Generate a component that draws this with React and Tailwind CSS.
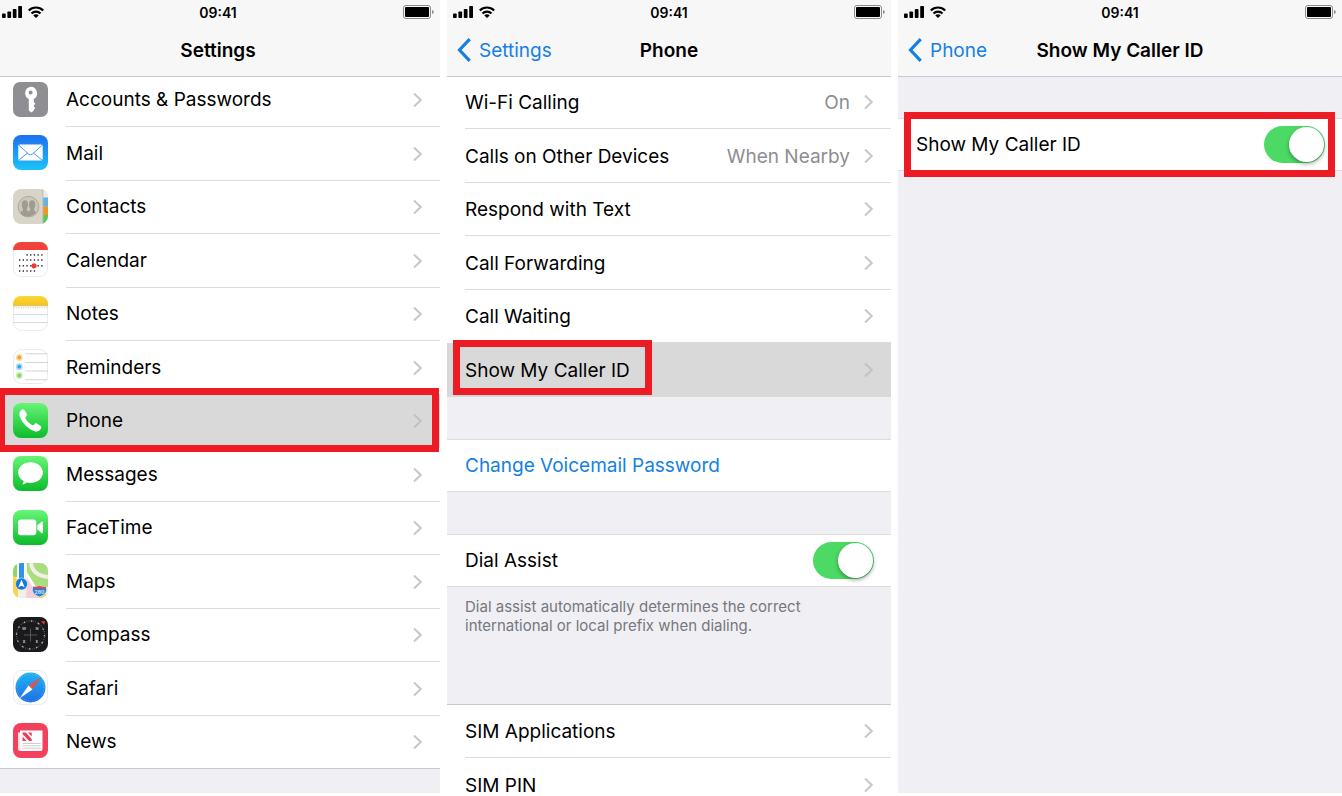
import { useState } from 'react';

const KeyIcon = () => (
  <>
    <rect width="35" height="35" rx="7" fill="#8e8e93" />
    <path
      fill="#fff"
      fillRule="evenodd"
      d="M17.6 4.800a6.600 6.600 0 0 1 3.200 12.300v3l1.500 1.600-1.500 1.700v1.200l1.500 1.500-1.500 1.600v1l-2.600 1.700-2.400-2V17.200a6.600 6.600 0 0 1 1.800-12.400zm0 3.700a2 2 0 1 0 0 4 2 2 0 0 0 0-4z"
    />
  </>
);

const MailIcon = () => (
  <>
    <defs>
      <linearGradient id="mailBg" x1="0" y1="0" x2="0" y2="1">
        <stop offset="0" stopColor="#1e6ff0" />
        <stop offset="1" stopColor="#1cc3f8" />
      </linearGradient>
    </defs>
    <rect width="35" height="35" rx="8" fill="url(#mailBg)" />
    <rect x="5.3" y="9.6" width="24.4" height="16" rx="1.6" fill="#fff" />
    <path d="M6 10.4l9.8 8.8q1.7 1.4 3.4 0l9.8-8.8M6 25l8.6-7M29 25l-8.6-7" fill="none" stroke="#4c9bec" strokeWidth="1" />
  </>
);

const ContactsIcon = () => (
  <>
    <defs>
      <clipPath id="contactsClip">
        <rect width="35" height="35" rx="8" />
      </clipPath>
    </defs>
    <g clipPath="url(#contactsClip)">
      <rect width="35" height="35" fill="#d8d4c8" />
      <rect x="30" width="5" height="9" fill="#ecebe6" />
      <rect x="30" y="8.5" width="5" height="9" fill="#5fb4ea" />
      <rect x="30" y="17.5" width="5" height="8.5" fill="#f79321" />
      <rect x="30" y="26" width="5" height="9" fill="#54cb58" />
      <rect x="29.4" width="1" height="35" fill="#bdb9ad" />
      <circle cx="15.5" cy="17.7" r="10.3" fill="#cdc8bc" stroke="#a8a398" strokeWidth=".9" />
      <path
        fill="#a19c92"
        d="M7.300 24.500c.5-2.700 2.500-2.500 2.700-3.700.1-1-1.300-2.500-1.300-5.400 0-2.700 1.200-4.200 3.200-4.200s3.100 1.500 3.100 4.200c0 2.900-1.400 4.400-1.300 5.400.1.700 1.100 1 1.800 1.600.7-.6 1.700-.9 1.800-1.600.1-1-1.300-2.500-1.300-5.400 0-2.700 1.200-4.200 3.200-4.200s3.100 1.500 3.100 4.200c0 2.900-1.400 4.400-1.300 5.400.2 1.200 1.500 1 2 2.600a10.300 10.300 0 0 1-15.700 1.100z"
      />
    </g>
  </>
);

const dotRows = [
  { y: 12.9, from: 2, to: 6 },
  { y: 18, from: 0, to: 6 },
  { y: 23.8, from: 0, to: 6 },
  { y: 29, from: 0, to: 4 },
];

const CalendarIcon = () => (
  <>
    <rect x=".5" y=".5" width="34" height="34" rx="8" fill="#fff" stroke="#ebebeb" />
    <path d="M0 8a8 8 0 0 1 8-8h19a8 8 0 0 1 8 8z" fill="#f2413a" />
    {dotRows.map((row) =>
      [0, 1, 2, 3, 4, 5, 6]
        .filter((c) => c >= row.from && c <= row.to)
        .map((c) => <rect key={`${row.y}-${c}`} x={6 + c * 3.7} y={row.y - 0.8} width="1.3" height="1.6" fill="#333" />)
    )}
    <circle cx="21" cy="23.8" r="2.600" fill="#ee3a38" />
  </>
);

const NotesIcon = () => (
  <>
    <defs>
      <linearGradient id="notesBg" x1="0" y1="0" x2="0" y2="1">
        <stop offset="0" stopColor="#fbd737" />
        <stop offset="1" stopColor="#f5c31e" />
      </linearGradient>
    </defs>
    <rect x=".5" y=".5" width="34" height="34" rx="8" fill="#fff" stroke="#ebebeb" />
    <path d="M0 9.500V8a8 8 0 0 1 8-8h19a8 8 0 0 1 8 8v1.500z" fill="url(#notesBg)" />
    <path d="M0 9.800h35" stroke="#c9a94a" strokeWidth=".7" />
    <path d="M1 11.800h33" stroke="#c4c4c4" strokeWidth="1" strokeDasharray="1 1.300" />
    <path d="M0 18.500h35M0 26.500h35" stroke="#d4d6da" strokeWidth=".9" />
  </>
);

const RemindersIcon = () => (
  <>
    <rect x=".5" y=".5" width="34" height="34" rx="8" fill="#fff" stroke="#ebebeb" />
    {[
      { y: 8.5, color: '#f5a12f' },
      { y: 17.7, color: '#35aae8' },
      { y: 26.5, color: '#7bd65e' },
    ].map(({ y, color }) => (
      <g key={y}>
        <circle cx="6.300" cy={y} r="3.400" fill={color} opacity=".4" />
        <circle cx="6.300" cy={y} r="1.900" fill={color} />
      </g>
    ))}
    <path d="M12.500 4.800H34.500M12.500 13.500H35M12.500 22H35M12.500 30.700H34.500" stroke="#cfcfd2" strokeWidth=".9" />
  </>
);

const GreenTile = () => (
  <>
    <defs>
      <linearGradient id="greenBg" x1="0" y1="0" x2="0" y2="1">
        <stop offset="0" stopColor="#67f577" />
        <stop offset="1" stopColor="#0dbb2b" />
      </linearGradient>
    </defs>
    <rect width="35" height="35" rx="8" fill="url(#greenBg)" />
  </>
);

const PhoneIcon = () => (
  <>
    <GreenTile />
    <path
      fill="#fff"
      d="M8.700 6.700c1.300-.8 2.300-.3 3 .8l1.800 3c.7 1.200.6 2-.3 2.900-1.300 1.200-1 1.800.2 3.500 1.300 1.700 2.900 3.200 4.600 4.400 1.600 1.100 2.200 1.200 3.300-.1.900-1 1.700-1.100 2.900-.4l3 1.900c1.200.7 1.500 1.700.7 3-1.300 2.100-3.400 3.300-6.300 2.500-3-.8-6.600-3.200-9.300-6-2.700-2.900-4.900-6.300-5.700-9.200-.700-2.900.1-5 2.100-6.300z"
    />
  </>
);

const MessagesIcon = () => (
  <>
    <GreenTile />
    <path
      fill="#fff"
      d="M17.500 6.300c6.900 0 12.400 4.500 12.400 10.300S24.400 27 17.500 27c-1.300 0-2.600-.2-3.700-.5-1.300 1.200-2.900 1.800-4.700 2 .9-.9 1.500-2 1.500-3.400-3.300-1.800-5.500-5-5.500-8.500 0-5.800 5.500-10.300 12.400-10.300z"
    />
  </>
);

const FaceTimeIcon = () => (
  <>
    <GreenTile />
    <rect x="5" y="9.500" width="18.300" height="15.800" rx="3" fill="#fff" />
    <path d="M24.300 15.200l4.200-3.500q1.400-.9 1.400.7v10q0 1.600-1.400.7l-4.200-3.500z" fill="#fff" />
  </>
);

const MapsIcon = () => (
  <>
    <defs>
      <clipPath id="mapsClip">
        <rect width="35" height="35" rx="8" />
      </clipPath>
    </defs>
    <g clipPath="url(#mapsClip)">
      <rect width="35" height="35" fill="#f3efe4" />
      <path d="M14 0h21v24H24L14 12z" fill="#a8de80" />
      <path d="M0 0h4v14H0z" fill="#8ed66a" />
      <path d="M0 12l5 5v18H0z" fill="#fbd34b" />
      <path d="M14 15l12 20H13z" fill="#f6cddb" />
      <path d="M18 0c1 8 7 13 17 14" fill="none" stroke="#f3efe4" strokeWidth="4" />
      <path d="M13 10l15 25" stroke="#fff" strokeWidth="2.500" />
      <path d="M24 35l11-5v5z" fill="#fbd34b" />
      <path d="M8.500 0v20" stroke="#fff" strokeWidth="8" />
      <path d="M8.500 0v20" stroke="#3093ea" strokeWidth="5" />
      <circle cx="8.500" cy="21" r="6" fill="#1679dc" stroke="#fff" strokeWidth=".5" />
      <path d="M8.500 16.800l3.200 7.400-3.200-1.500-3.200 1.500z" fill="#fff" />
      <path d="M20 23.500q3 .9 6.500-.8 3.500 1.700 6.500.8 3 7-6.500 10.500Q17 30.500 20 23.500z" fill="#2c7ed1" stroke="#fff" strokeWidth=".6" />
      <path d="M20.500 23.600q3 .6 6-.8 3 1.400 6 .8l.6 2H19.900z" fill="#e2474b" />
      <text x="26.500" y="30.500" textAnchor="middle" fontSize="5" fontWeight="700" fill="#d4e6f7">280</text>
    </g>
  </>
);

const CompassIcon = () => (
  <>
    <rect width="35" height="35" rx="8" fill="#1a1a1c" />
    <circle cx="17.500" cy="18" r="14" fill="none" stroke="#77777a" strokeWidth="1.200" strokeDasharray=".6 1.600" />
    <circle cx="17.500" cy="18" r="14" fill="none" stroke="#b4b4b6" strokeWidth="1.300" strokeDasharray="1.500 5.830" />
    <path d="M17.500 11.500v13M11 18h13" stroke="#5c5c5f" strokeWidth=".9" />
    <g fill="#b9b9bb" fontSize="4" fontWeight="700" textAnchor="middle">
      <text x="11" y="13">W</text>
      <text x="24" y="13">N</text>
      <text x="11" y="26">S</text>
      <text x="24" y="26">E</text>
    </g>
    <path d="M28 4.500l3.800-.6-.5 3.800z" fill="#f3382f" />
  </>
);

const SafariIcon = () => (
  <>
    <defs>
      <linearGradient id="safariBg" x1="0" y1="0" x2="0" y2="1">
        <stop offset="0" stopColor="#1fb4f3" />
        <stop offset="1" stopColor="#1e6fe6" />
      </linearGradient>
    </defs>
    <rect x=".5" y=".5" width="34" height="34" rx="8" fill="#fff" stroke="#ebebeb" />
    <circle cx="17.500" cy="17.500" r="15" fill="url(#safariBg)" />
    <circle cx="17.500" cy="17.500" r="13.500" fill="none" stroke="#fff" strokeWidth="1.200" strokeDasharray=".4 1.700" opacity=".4" />
    <path d="M28.300 6.800L19.500 19.600l-4-4z" fill="#dd5550" />
    <path d="M6.700 28.200l8.800-12.600 4 4z" fill="#fff" />
  </>
);

const NewsIcon = () => (
  <>
    <rect width="35" height="35" rx="8" fill="#f2405d" />
    <path d="M5 9.500h3.500V28H7a2 2 0 0 1-2-2z" fill="#f9dfe2" />
    <path d="M7 7.500h22.500V26a2 2 0 0 1-2 2H7.500z" fill="#fff" />
    <path d="M9.500 9.500h3.200l6 6.500v2h-2.500l-6.700-7z" fill="#ee3a58" />
    <path d="M9.500 13.500l4 4.500h-4zM15 9.500h3.700v4z" fill="#ee3a58" />
    <path d="M9.500 20.500h18.200M9.500 22.800h18.200M9.500 25.200h18.200" stroke="#cfc4c7" strokeWidth=".9" />
  </>
);

const apps = [
  { name: 'Accounts & Passwords', Icon: KeyIcon },
  { name: 'Mail', Icon: MailIcon },
  { name: 'Contacts', Icon: ContactsIcon },
  { name: 'Calendar', Icon: CalendarIcon },
  { name: 'Notes', Icon: NotesIcon },
  { name: 'Reminders', Icon: RemindersIcon },
  { name: 'Phone', Icon: PhoneIcon, active: true },
  { name: 'Messages', Icon: MessagesIcon },
  { name: 'FaceTime', Icon: FaceTimeIcon },
  { name: 'Maps', Icon: MapsIcon },
  { name: 'Compass', Icon: CompassIcon },
  { name: 'Safari', Icon: SafariIcon },
  { name: 'News', Icon: NewsIcon },
];

const callOptions = [
  { name: 'Wi-Fi Calling', value: 'On' },
  { name: 'Calls on Other Devices', value: 'When Nearby' },
  { name: 'Respond with Text' },
  { name: 'Call Forwarding' },
  { name: 'Call Waiting' },
  { name: 'Show My Caller ID', active: true },
];

const Chevron = ({ dim }) => (
  <svg viewBox="0 0 9 16" className={`h-4 w-[9px] shrink-0 ${dim ? 'text-[#c2c2c5]' : 'text-[#c7c7cc]'}`}>
    <path d="M1 1.500L7.700 8 1 14.500" fill="none" stroke="currentColor" strokeWidth="2" />
  </svg>
);

const StatusBar = () => (
  <div className="grid h-6 grid-cols-3 items-center text-sm font-semibold">
    <div className="flex items-center gap-1.5">
      <svg viewBox="0 0 20 12" className="h-3 w-5">
        <rect x="0" y="7.500" width="3.700" height="4.500" rx=".8" />
        <rect x="5.400" y="5.500" width="3.700" height="6.500" rx=".8" />
        <rect x="10.800" y="3" width="3.700" height="9" rx=".8" />
        <rect x="16.200" y="0" width="3.800" height="12" rx=".8" />
      </svg>
      <svg viewBox="0 0 16 12" className="h-3 w-4">
        <path d="M.8 4.500a10.200 10.200 0 0 1 14.400 0M3.500 7.500a6.300 6.300 0 0 1 9 0" fill="none" stroke="#000" strokeWidth="2.200" />
        <path d="M8 12L5.300 9.500a3.700 3.700 0 0 1 5.400 0z" />
      </svg>
    </div>
    <time className="pt-px text-center">09:41</time>
    <svg viewBox="0 0 31 14" className="h-3.5 w-[31px] justify-self-end">
      <rect x=".5" y=".5" width="27" height="13" rx="2.500" fill="none" stroke="#8b8b8d" />
      <rect x="2" y="2" width="24" height="10" rx="1" />
      <path d="M29 5q1.800.5 1.800 2T29 9z" fill="#8b8b8d" />
    </svg>
  </div>
);

const Header = ({ title, back, className = 'px-1.5' }) => (
  <header className={`relative z-10 h-[77px] border-b border-[#c8c8cc] bg-[#f7f7f8] ${className}`}>
    <StatusBar />
    <div className="relative flex h-[52px] items-center justify-center">
      {back && (
        <a href="#back" className="absolute left-1 flex items-center gap-2 text-[#1580e4]">
          <svg viewBox="0 0 14 24" className="h-6 w-3.5">
            <path d="M12.700 1.200L2.500 12l10.200 10.800" fill="none" stroke="currentColor" strokeWidth="3.200" />
          </svg>
          <span className="pt-0.5">{back}</span>
        </a>
      )}
      <h1 className="pt-0.5 font-semibold">{title}</h1>
    </div>
  </header>
);

const Toggle = ({ id, checked, onChange }) => (
  <input
    id={id}
    type="checkbox"
    checked={checked}
    onChange={onChange}
    className="flex h-[37px] w-[61px] shrink-0 appearance-none rounded-full bg-gray-300 p-px before:size-[35px] before:rounded-full before:bg-white before:shadow-[0_2px_4px_rgba(0,0,0,0.35)] checked:justify-end checked:bg-[#4cd964]"
  />
);

const Marker = ({ className }) => (
  <span className={`pointer-events-none absolute z-20 border-[7px] border-[#ed1c24] ${className}`} />
);

const OptionRow = ({ name, value, active }) => (
  <li className={`relative odd:h-[53px] even:h-[54px] ${active ? 'bg-[#d9d9d9]' : 'bg-white'}`}>
    <a href="#option" className="flex h-full pl-[18px]">
      <span className={`flex flex-1 items-center gap-3.5 border-b pr-[18px] ${active ? 'border-transparent' : 'border-[#dcdcdf]'}`}>
        <span className="flex-1 pt-0.5">{name}</span>
        {value && <span className="pt-0.5 text-[#8e8e93]">{value}</span>}
        <Chevron dim={active} />
      </span>
    </a>
    {active && <Marker className="-top-[3px] bottom-0.5 left-1.5 w-[199px]" />}
  </li>
);

const SettingsPanel = () => (
  <section className="overflow-hidden bg-[#efeff4]">
    <Header title="Settings" className="pl-0.5 pr-1.5" />
    <ul className="-mt-[3px] bg-white">
      {apps.map(({ name, Icon, active }) => (
        <li key={name} className={`group relative odd:h-[53px] even:h-[54px] ${active ? 'bg-[#d9d9d9]' : ''}`}>
          <a href="#app" className="flex h-full items-center gap-[18px] border-[#c8c8cc] pl-[13px] group-last:border-b">
            <svg viewBox="0 0 35 35" className="mb-[3px] size-[35px] shrink-0">
              <Icon />
            </svg>
            <span
              className={`flex h-full flex-1 items-center justify-between border-b pr-[18px] group-last:border-b-0 ${active ? 'border-transparent' : 'border-[#dcdcdf]'}`}
            >
              {name}
              <Chevron dim={active} />
            </span>
          </a>
          {active && <Marker className="-top-[7px] -bottom-1 left-0 right-px border-l-[5px]" />}
        </li>
      ))}
    </ul>
  </section>
);

const PhonePanel = () => {
  const [dialAssist, setDialAssist] = useState(true);

  return (
    <section className="bg-[#efeff4]">
      <Header title="Phone" back="Settings" />
      <ul className="-mt-px">
        {callOptions.map((option) => (
          <OptionRow key={option.name} {...option} />
        ))}
      </ul>
      <button type="button" className="mt-[42px] block h-[53px] w-full border-y border-[#dcdcdf] bg-white px-[18px] text-left text-[#1580e4]">
        Change Voicemail Password
      </button>
      <div className="mt-[42px] flex h-[53px] items-center justify-between border-y border-[#dcdcdf] bg-white pl-[18px] pr-[17px]">
        <label htmlFor="dial-assist">Dial Assist</label>
        <Toggle id="dial-assist" checked={dialAssist} onChange={(e) => setDialAssist(e.target.checked)} />
      </div>
      <p className="px-[18px] pt-2.5 text-[15px] leading-[19px] text-[#77777c]">
        Dial assist automatically determines the correct
        <br />
        international or local prefix when dialing.
      </p>
      <ul className="mt-[69px] border-t border-[#c8c8cc]">
        <OptionRow name="SIM Applications" />
        <OptionRow name="SIM PIN" />
      </ul>
    </section>
  );
};

const CallerIdPanel = () => {
  const [showId, setShowId] = useState(true);

  return (
    <section className="overflow-hidden bg-[#efeff4]">
      <Header title="Show My Caller ID" back="Phone" />
      <div className="relative mt-[41px] flex h-[53px] items-center justify-between border-y border-[#dcdcdf] bg-white pl-[18px] pr-[17px]">
        <label htmlFor="caller-id">Show My Caller ID</label>
        <Toggle id="caller-id" checked={showId} onChange={(e) => setShowId(e.target.checked)} />
        <Marker className="-inset-y-[7px] left-1.5 right-[7px]" />
      </div>
    </section>
  );
};

const App = () => {
  return (
    <main className="grid h-screen grid-cols-[440fr_444fr_444fr] grid-rows-[minmax(0,1fr)] gap-[7px] overflow-hidden bg-white pb-[3px] font-['Inter',sans-serif] text-[19px] leading-5 text-black">
      <SettingsPanel />
      <PhonePanel />
      <CallerIdPanel />
    </main>
  );
};

export default App;
